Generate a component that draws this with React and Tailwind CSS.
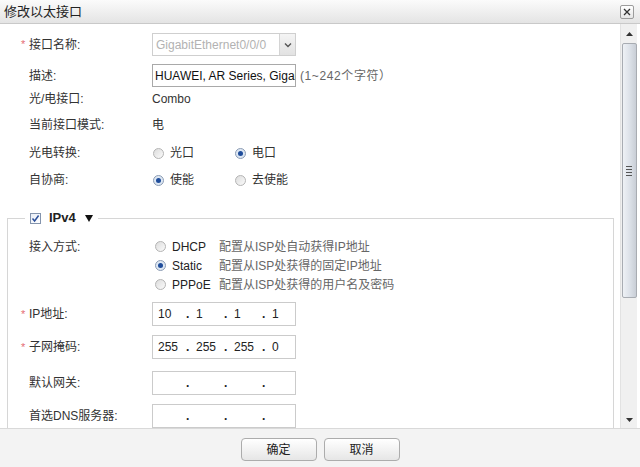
import React from 'react'

function Radio({ checked }) {
  return checked ? (
    <span className="w-[11px] h-[11px] rounded-full border border-[#8d9db4] bg-[#dde7f3] flex items-center justify-center shrink-0">
      <span className="w-[5px] h-[5px] rounded-full bg-[#1f4d9b]" />
    </span>
  ) : (
    <span className="w-[11px] h-[11px] rounded-full border border-[#b4b4b4] bg-gradient-to-br from-[#dcdcdc] to-[#fbfbfb] shrink-0" />
  )
}

function Option({ checked, label }) {
  return (
    <div className="w-[82px] flex items-center gap-[6px]">
      <Radio checked={checked} />
      <span>{label}</span>
    </div>
  )
}

function Row({ label, required, inset, className = '', children }) {
  return (
    <div className={`flex items-center ${className}`}>
      <div className={inset ? 'w-[144px] shrink-0 flex items-center pl-[13px]' : 'w-[152px] shrink-0 flex items-center pl-[21px]'}>
        <span className="w-[8px] text-[11px] leading-none text-[#e46d74]">{required ? '*' : ''}</span>
        <span>{label}</span>
      </div>
      {children}
    </div>
  )
}

function IpBox({ parts }) {
  return (
    <div className="w-[144px] h-[24px] border border-[#cbcbcb] flex items-center pl-[5px] text-[#222]">
      {parts.map((p, i) => (
        <React.Fragment key={i}>
          <span className="w-[28px] shrink-0">{p}</span>
          {i < 3 && <span className="w-[10px] shrink-0 font-bold">.</span>}
        </React.Fragment>
      ))}
    </div>
  )
}

export default function App() {
  return (
    <div
      className="w-[640px] h-[467px] flex flex-col bg-white overflow-hidden text-[12px] text-[#333]"
      style={{ fontFamily: '"Liberation Sans", "Noto Sans CJK SC", sans-serif' }}
    >
      {/* title */}
      <div className="h-[24px] shrink-0 flex items-center justify-between pl-[4px] pr-[6px] border-b border-[#c9c9c9] bg-gradient-to-b from-[#fbfbfb] to-[#e4e4e4]">
        <span className="text-[13px] text-[#222]">修改以太接口</span>
        <span className="w-[14px] h-[14px] border border-[#9c9c9c] rounded-[2px] bg-gradient-to-b from-white to-[#e6e6e6] flex items-center justify-center">
          <svg width="8" height="8" viewBox="0 0 8 8">
            <path d="M1 1L7 7M7 1L1 7" stroke="#333" strokeWidth="1.3" />
          </svg>
        </span>
      </div>

      {/* body */}
      <div className="flex-1 flex min-h-0">
        <div className="flex-1 overflow-hidden pt-[9px]">
          <Row label="接口名称:" required className="h-[23px]">
            <div className="w-[144px] h-[23px] border border-[#cfcfcf] flex">
              <span className="flex-1 pl-[3px] flex items-center text-[#b2b2b2] whitespace-nowrap overflow-hidden">GigabitEthernet0/0/0</span>
              <span className="w-[16px] border-l border-[#d4d4d4] bg-gradient-to-b from-[#f4f4f4] to-[#e2e2e2] flex items-center justify-center">
                <svg width="8" height="6" viewBox="0 0 8 6">
                  <path d="M1 1.5L4 4.5L7 1.5" stroke="#555" strokeWidth="1.4" fill="none" />
                </svg>
              </span>
            </div>
          </Row>
          <Row label="描述:" className="h-[23px] mt-[8px]">
            <input
              readOnly
              value="HUAWEI, AR Series, GigabitEthernet0/0/0 Interface"
              className="w-[144px] h-[23px] border border-[#a9a9a9] pl-[2px] text-[12px] text-[#111] outline-none"
            />
            <span className="ml-[4px] text-[#666] tracking-[0.6px]">(1~242个字符）</span>
          </Row>
          <Row label="光/电接口:" className="h-[24px]">
            <span>Combo</span>
          </Row>
          <Row label="当前接口模式:" className="h-[28px]">
            <span>电</span>
          </Row>
          <Row label="光电转换:" className="h-[28px]">
            <div className="flex items-center pl-[1px]">
              <Option label="光口" />
              <Option checked label="电口" />
            </div>
          </Row>
          <Row label="自协商:" className="h-[26px]">
            <div className="flex items-center pl-[1px]">
              <Option checked label="使能" />
              <Option label="去使能" />
            </div>
          </Row>

          <fieldset className="mt-[17px] ml-[7px] mr-[6px] border border-[#d6d6d6] pb-[30px]">
            <legend className="ml-[17px] px-[5px] h-[16px] flex items-center">
              <span className="w-[11px] h-[11px] border border-[#8494ad] bg-gradient-to-br from-[#e9eef6] to-white flex items-center justify-center">
                <svg width="9" height="9" viewBox="0 0 9 9">
                  <path d="M1.5 4.5L3.6 7L7.6 1.5" stroke="#2b4f9a" strokeWidth="1.5" fill="none" />
                </svg>
              </span>
              <span className="ml-[8px] text-[13px] font-bold text-[#222]">IPv4</span>
              <svg className="ml-[9px]" width="8" height="7" viewBox="0 0 8 7">
                <path d="M0 0H8L4 7Z" fill="#111" />
              </svg>
            </legend>

            <div className="pt-[11px] flex items-start">
              <div className="w-[144px] shrink-0 h-[19px] flex items-center pl-[21px]">接入方式:</div>
              <div className="flex flex-col pl-[3px]">
                {[
                  ['DHCP', '配置从ISP处自动获得IP地址', false],
                  ['Static', '配置从ISP处获得的固定IP地址', true],
                  ['PPPoE', '配置从ISP处获得的用户名及密码', false],
                ].map(([name, desc, on]) => (
                  <div key={name} className="h-[19px] flex items-center">
                    <Radio checked={on} />
                    <span className="ml-[6px] w-[47px] text-[#222]">{name}</span>
                    <span className="text-[#666]">{desc}</span>
                  </div>
                ))}
              </div>
            </div>

            <Row inset required label="IP地址:" className="mt-[8px] h-[24px]">
              <IpBox parts={['10', '1', '1', '1']} />
            </Row>
            <Row inset required label="子网掩码:" className="mt-[9px] h-[24px]">
              <IpBox parts={['255', '255', '255', '0']} />
            </Row>
            <Row inset label="默认网关:" className="mt-[12px] h-[24px]">
              <IpBox parts={['', '', '', '']} />
            </Row>
            <Row inset label="首选DNS服务器:" className="mt-[9px] h-[24px]">
              <IpBox parts={['', '', '', '']} />
            </Row>
          </fieldset>
        </div>

        {/* scrollbar */}
        <div className="w-[17px] shrink-0 bg-[#f0f0f0] border-l border-[#e2e2e2] flex flex-col items-center">
          <div className="h-[19px] w-full flex items-center justify-center pt-[1px]">
            <svg width="7" height="4" viewBox="0 0 7 4">
              <path d="M0 4L3.5 0L7 4Z" fill="#333" />
            </svg>
          </div>
          <div className="h-[255px] w-[15px] border border-[#a8acb2] rounded-[2px] bg-gradient-to-r from-[#eef1f5] via-[#dde2e9] to-[#c9ced6] flex items-center justify-center">
            <div className="flex flex-col gap-[2px]">
              <span className="w-[6px] h-[1px] bg-[#555]" />
              <span className="w-[6px] h-[1px] bg-[#555]" />
              <span className="w-[6px] h-[1px] bg-[#555]" />
              <span className="w-[6px] h-[1px] bg-[#555]" />
            </div>
          </div>
          <div className="flex-1" />
          <div className="h-[16px] w-full flex items-center justify-center">
            <svg width="7" height="4" viewBox="0 0 7 4">
              <path d="M0 0L3.5 4L7 0Z" fill="#333" />
            </svg>
          </div>
        </div>
        <div className="w-[3px] shrink-0 bg-white" />
      </div>

      {/* footer */}
      <div className="h-[39px] shrink-0 border-t border-[#d9d9d9] bg-[#f3f3f3] flex justify-center gap-[7px] pt-[9px]">
        <button className="w-[76px] h-[23px] border border-[#acacac] rounded-[4px] bg-gradient-to-b from-white to-[#e6e6e6] text-[#222]">确定</button>
        <button className="w-[76px] h-[23px] border border-[#acacac] rounded-[4px] bg-gradient-to-b from-white to-[#e6e6e6] text-[#222]">取消</button>
      </div>
    </div>
  )
}
